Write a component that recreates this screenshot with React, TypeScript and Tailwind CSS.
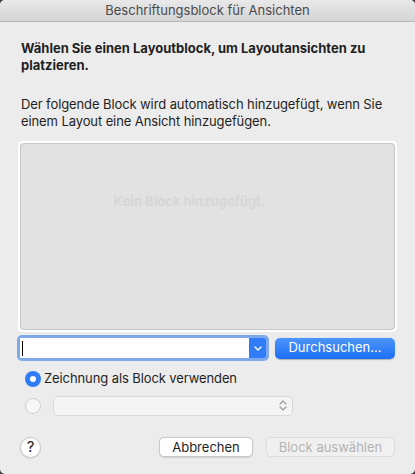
import * as React from "react";

const font = { fontFamily: "Inter, 'Noto Sans', sans-serif" };

function Chevron() {
	return (
		<svg width="8" height="5" viewBox="0 0 8 5" fill="none">
			<path d="M1 1l3 3 3-3" stroke="white" strokeWidth="1.4" strokeLinecap="round" strokeLinejoin="round" />
		</svg>
	);
}

function UpDown() {
	return (
		<svg width="8" height="13" viewBox="0 0 8 13" fill="none">
			<path d="M1 5l3-3 3 3M1 8l3 3 3-3" stroke="#9a9a9a" strokeWidth="1.2" strokeLinecap="round" strokeLinejoin="round" />
		</svg>
	);
}

export default function App() {
	return (
		<div className="w-[415px] h-[474px] bg-[#3b3b3b]" style={font}>
			<div className="w-full h-full rounded-[5px] overflow-hidden bg-[#ececec] flex flex-col text-[13px] text-[#1f1f1f]">
				<div className="h-[22px] shrink-0 bg-gradient-to-b from-[#e9e9e9] to-[#d4d4d4] border-b border-[#b8b8b8] flex items-center justify-center text-[#4a4a4a] text-[13px]">
					Beschriftungsblock für Ansichten
				</div>

				<div className="px-[21px] mt-[18px] font-bold leading-[17px]">
					Wählen Sie einen Layoutblock, um Layoutansichten zu platzieren.
				</div>

				<div className="px-[21px] mt-[22px] leading-[17px] tracking-[-0.1px]">
					Der folgende Block wird automatisch hinzugefügt, wenn Sie einem Layout eine Ansicht hinzugefügen.
				</div>

				<div className="mx-[18px] mt-[11px] h-[191px] rounded-[5px] border-2 border-white">
					<div className="h-full rounded-[4px] border border-[#c6c6c6] bg-[#e2e2e2] flex justify-center pt-[48px]">
						<span className="font-bold text-[#d6d6d6] -ml-[36px]">Kein Block hinzugefügt.</span>
					</div>
				</div>

				<div className="flex items-center mt-[3px] pl-[17px]">
					<div className="w-[252px] h-[26px] rounded-[5px] bg-[#80a8ec] p-[3px] flex">
						<div className="flex-1 bg-white flex items-center pl-[2px]">
							<div className="w-[1px] h-[15px] bg-black" />
						</div>
						<div className="w-[17px] bg-[#2f7cf6] flex items-center justify-center rounded-r-[3px]">
							<Chevron />
						</div>
					</div>
					<button className="ml-[6px] w-[120px] h-[21px] rounded-[5px] bg-gradient-to-b from-[#4b95fb] to-[#1b6ff6] text-white text-[13px] shadow-[0_0.5px_1px_rgba(0,0,0,0.25)]">
						Durchsuchen...
					</button>
				</div>

				<div className="flex items-center mt-[8px] pl-[25px] gap-[3px]">
					<div className="w-[16px] h-[16px] rounded-full bg-[#2f7cf6] flex items-center justify-center">
						<div className="w-[6px] h-[6px] rounded-full bg-white" />
					</div>
					<span className="tracking-[-0.1px]">Zeichnung als Block verwenden</span>
				</div>

				<div className="flex items-center mt-[7px] pl-[25px] gap-[12px]">
					<div className="w-[16px] h-[16px] rounded-full bg-[#f7f7f7] border border-[#cfcfcf]" />
					<div className="w-[240px] h-[20px] rounded-[4px] bg-[#f4f4f4] border border-[#d9d9d9] flex items-center justify-end pr-[5px]">
						<UpDown />
					</div>
				</div>

				<div className="flex items-center mt-[21px] pl-[20px] pr-[20px]">
					<div className="w-[21px] h-[21px] rounded-full bg-white border border-[#c9c9c9] shadow-[0_0.5px_1px_rgba(0,0,0,0.15)] flex items-center justify-center text-[15px] text-[#222]">
						?
					</div>
					<div className="flex-1" />
					<button className="w-[94px] h-[20px] rounded-[5px] bg-white border border-[#c8c8c8] shadow-[0_0.5px_1px_rgba(0,0,0,0.12)] text-[13px] text-[#1f1f1f]">
						Abbrechen
					</button>
					<button className="ml-[13px] w-[129px] h-[20px] rounded-[5px] bg-[#f0f0f0] border border-[#dcdcdc] text-[13px] text-[#b4b4b4]">
						Block auswählen
					</button>
				</div>
			</div>
		</div>
	);
}
